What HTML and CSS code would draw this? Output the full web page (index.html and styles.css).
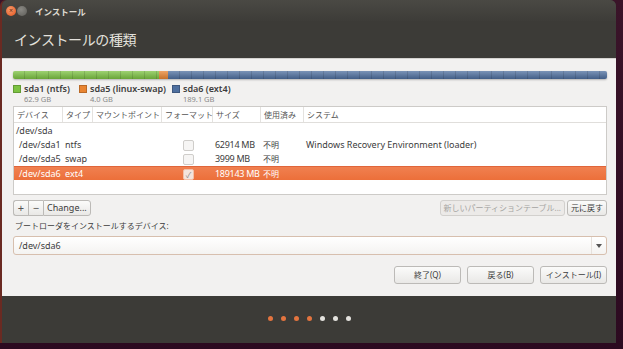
FILE: index.html
```html
<!DOCTYPE html>
<html lang="ja">
<head>
  <meta charset="UTF-8">
  <link rel="stylesheet" href="styles.css">
</head>
<body>
  <div class="window">
    <div class="titlebar">
      <span class="win-btn close">×</span>
      <span class="win-btn min"></span>
      <span class="win-title">インストール</span>
    </div>
    <div class="heading">インストールの種類</div>

    <div class="content">
      <div class="disk-bar">
        <div class="seg green" style="width: 146px"></div>
        <div class="seg orange" style="width: 9px"></div>
        <div class="seg blue"></div>
      </div>

      <div class="legend">
        <div class="legend-item" style="width: 66px">
          <span class="swatch green"></span>
          <div><div class="legend-name">sda1 (ntfs)</div><div class="legend-size">62.9 GB</div></div>
        </div>
        <div class="legend-item" style="width: 93px">
          <span class="swatch orange"></span>
          <div><div class="legend-name">sda5 (linux-swap)</div><div class="legend-size">4.0 GB</div></div>
        </div>
        <div class="legend-item">
          <span class="swatch blue"></span>
          <div><div class="legend-name">sda6 (ext4)</div><div class="legend-size">189.1 GB</div></div>
        </div>
      </div>

      <div class="table">
        <div class="row head">
          <div class="cell">デバイス</div>
          <div class="cell">タイプ</div>
          <div class="cell">マウントポイント</div>
          <div class="cell">フォーマット</div>
          <div class="cell">サイズ</div>
          <div class="cell">使用済み</div>
          <div class="cell">システム</div>
        </div>
        <div class="row disk">
          <div class="cell">/dev/sda</div>
          <div class="cell"></div><div class="cell"></div><div class="cell"></div>
          <div class="cell"></div><div class="cell"></div><div class="cell"></div>
        </div>
        <div class="row">
          <div class="cell indent">/dev/sda1</div>
          <div class="cell">ntfs</div>
          <div class="cell"></div>
          <div class="cell check-cell"><span class="check"></span></div>
          <div class="cell num">62914 MB</div>
          <div class="cell ja">不明</div>
          <div class="cell">Windows Recovery Environment (loader)</div>
        </div>
        <div class="row">
          <div class="cell indent">/dev/sda5</div>
          <div class="cell">swap</div>
          <div class="cell"></div>
          <div class="cell check-cell"><span class="check"></span></div>
          <div class="cell num">3999 MB</div>
          <div class="cell ja">不明</div>
          <div class="cell"></div>
        </div>
        <div class="row selected">
          <div class="cell indent">/dev/sda6</div>
          <div class="cell">ext4</div>
          <div class="cell"></div>
          <div class="cell check-cell"><span class="check on">✓</span></div>
          <div class="cell num">189143 MB</div>
          <div class="cell ja">不明</div>
          <div class="cell"></div>
        </div>
      </div>

      <div class="table-tools">
        <div class="btn-group">
          <button class="btn icon">+</button>
          <button class="btn icon">−</button>
          <button class="btn">Change...</button>
        </div>
        <div class="btn-group spaced">
          <button class="btn ja disabled">新しいパーティションテーブル...</button>
          <button class="btn ja">元に戻す</button>
        </div>
      </div>

      <div class="boot-label">ブートローダをインストールするデバイス:</div>
      <div class="combo">
        <span>/dev/sda6</span>
        <span class="combo-arrow"></span>
      </div>

      <div class="actions">
        <button class="btn ja action">終了(Q)</button>
        <button class="btn ja action">戻る(B)</button>
        <button class="btn ja action">インストール(I)</button>
      </div>
    </div>

    <div class="footer">
      <span class="dot done"></span>
      <span class="dot done"></span>
      <span class="dot done"></span>
      <span class="dot done"></span>
      <span class="dot"></span>
      <span class="dot"></span>
      <span class="dot"></span>
    </div>
  </div>
</body>
</html>
```

FILE: styles.css
```css
body {
  margin: 0;
  background: linear-gradient(180deg, #3a1429 0%, #2c0a20 100%);
  font-family: "Noto Sans", "Noto Sans CJK JP", sans-serif;
  font-size: 9px;
  color: #3c3c3c;
  height: 349px;
  overflow: hidden;
}
.ja {
  font-size: 8px;
}
.window {
  width: 616px;
  height: 343px;
  background: #3c3b37;
  border-radius: 6px 6px 0 0;
  border-left: 2px solid #6a2a22;
  box-sizing: border-box;
  display: flex;
  flex-direction: column;
}
.titlebar {
  height: 21px;
  display: flex;
  align-items: center;
  padding-left: 4px;
  gap: 1px;
  background: linear-gradient(180deg, #4a4944 0%, #3d3c38 100%);
  border-radius: 6px 6px 0 0;
}
.win-btn {
  width: 10px;
  height: 10px;
  border-radius: 50%;
  font-size: 7px;
  line-height: 10px;
  text-align: center;
  color: #6a2a10;
}
.win-btn.close {
  background: radial-gradient(circle at 40% 35%, #f79b6c, #e2521c);
}
.win-btn.min {
  background: radial-gradient(circle at 40% 35%, #8a8984, #5e5d58);
}
.win-title {
  margin-left: 7px;
  color: #dfdbd2;
  font-size: 8.5px;
  font-weight: 600;
}
.heading {
  height: 37px;
  padding-left: 12px;
  color: #e3e1dc;
  font-size: 14px;
  letter-spacing: -0.4px;
  line-height: 38px;
}
.content {
  background: #f2f1f0;
  height: 238px;
  box-sizing: border-box;
  padding: 12px 9px 0 11px;
  display: flex;
  flex-direction: column;
  border-top: 1px solid #d4d2cf;
}
.disk-bar {
  display: flex;
  height: 8px;
  border-radius: 2px;
  overflow: hidden;
  box-shadow: 0 1px 2px rgba(0, 0, 0, 0.25);
}
.seg {
  height: 100%;
  background-image:
    repeating-linear-gradient(90deg, transparent 0 11px, rgba(0, 0, 0, 0.12) 11px 12px),
    linear-gradient(180deg, rgba(255, 255, 255, 0.25), rgba(0, 0, 0, 0.15));
}
.seg.green { background-color: #7cc242; }
.seg.orange { background-color: #e98532; }
.seg.blue { background-color: #4e6f9f; flex: 1; }

.legend {
  display: flex;
  margin-top: 3px;
  height: 23px;
}
.legend-item {
  display: flex;
  gap: 3px;
}
.swatch {
  width: 8px;
  height: 8px;
  margin-top: 3px;
  box-sizing: border-box;
  border: 1px solid rgba(0, 0, 0, 0.2);
}
.swatch.green { background: #7cc242; }
.swatch.orange { background: #e98532; }
.swatch.blue { background: #4e6f9f; }
.legend-name {
  font-size: 9px;
  line-height: 13px;
  font-weight: 600;
  color: #3c3c3c;
}
.legend-size {
  font-size: 7.5px;
  line-height: 9px;
  color: #8a8a8a;
}

.table {
  margin-top: 1px;
  height: 89px;
  background: #ffffff;
  border: 1px solid #cdcbc8;
  box-sizing: border-box;
}
.row {
  display: grid;
  grid-template-columns: 49px 30px 69px 51px 48px 43px 1fr;
  height: 14px;
  line-height: 14px;
}
.row.head {
  height: 15px;
  line-height: 15px;
  border-bottom: 1px solid #e0dedb;
  color: #555;
}
.row.head .cell {
  border-right: 1px solid #e4e2df;
  padding-left: 3px;
  font-size: 8px;
}
.row.head .cell:last-child { border-right: none; }
.row.disk {
  height: 14px;
  margin-top: 1px;
}
.cell {
  white-space: nowrap;
  padding-left: 2px;
}
.cell.indent { padding-left: 5px; }
.cell.num { letter-spacing: -0.3px; }
.row.selected {
  background: linear-gradient(180deg, #f08050 0%, #ec6f3a 100%);
  color: #fff;
  border-top: 1px solid #e0653a;
  box-sizing: border-box;
}
.check-cell {
  display: flex;
  justify-content: center;
  align-items: center;
}
.check {
  width: 9px;
  height: 9px;
  border: 1px solid #cfcdca;
  border-radius: 2px;
  background: #f6f5f4;
  font-size: 8px;
  line-height: 9px;
  text-align: center;
  color: #8a8a8a;
}
.check.on {
  background: #f4e4dc;
  border-color: #f2c0a8;
}

.table-tools {
  display: flex;
  justify-content: space-between;
  margin-top: 5px;
}
.btn-group { display: flex; }
.btn-group.spaced { gap: 2px; }
.btn {
  font-family: "Noto Sans", "Noto Sans CJK JP", sans-serif;
  font-size: 9px;
  height: 16px;
  padding: 0 3px;
  border: 1px solid #bcbab7;
  border-radius: 3px;
  background: linear-gradient(180deg, #fbfbfa 0%, #e9e8e6 100%);
  color: #3c3c3c;
  line-height: 14px;
}
.btn.ja { font-size: 8px; }
.btn-group .btn.icon {
  width: 15px;
  padding: 0;
  font-size: 11px;
  color: #555;
  border-radius: 0;
  border-right: none;
}
.btn-group .btn.icon:first-child { border-radius: 3px 0 0 3px; }
.btn-group .btn.icon + .btn:not(.icon) { border-radius: 0 3px 3px 0; }
.btn.disabled {
  color: #a5a4a2;
  background: #eceae8;
  border-color: #d2d0cd;
}

.boot-label {
  margin-top: 3px;
  font-size: 8px;
  line-height: 14px;
  padding-left: 2px;
}
.combo {
  margin-top: 3px;
  height: 19px;
  border: 1px solid #d7bfae;
  border-radius: 3px;
  background: linear-gradient(180deg, #ffffff 0%, #f4f3f1 100%);
  display: flex;
  align-items: center;
  justify-content: space-between;
  padding-left: 5px;
  box-sizing: border-box;
}
.combo-arrow {
  width: 14px;
  height: 100%;
  border-left: 1px solid #e6e1dc;
  position: relative;
}
.combo-arrow::after {
  content: "";
  position: absolute;
  left: 4px;
  top: 7px;
  border-left: 3px solid transparent;
  border-right: 3px solid transparent;
  border-top: 4px solid #555;
}

.actions {
  display: flex;
  justify-content: flex-end;
  gap: 6px;
  margin-top: 11px;
}
.btn.action {
  width: 67px;
  height: 18px;
}

.footer {
  flex: 1;
  display: flex;
  justify-content: center;
  align-items: center;
  gap: 8px;
  padding-bottom: 3px;
}
.dot {
  width: 5px;
  height: 5px;
  border-radius: 50%;
  background: #e4e2de;
}
.dot.done { background: #e3743f; }
```
